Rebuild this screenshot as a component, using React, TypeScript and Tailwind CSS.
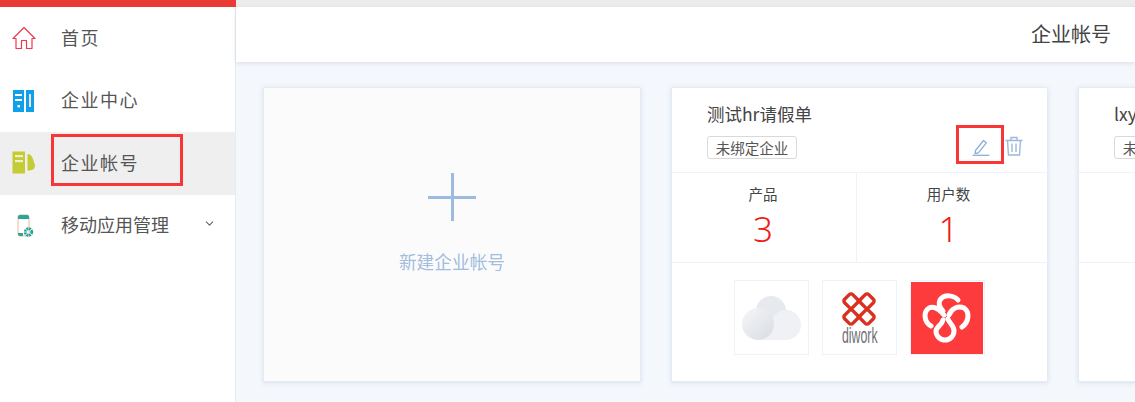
import { ChevronDown } from 'lucide-react'

const cjk = "font-['Noto_Sans_CJK_SC','Noto_Sans',sans-serif]"

function HomeIcon() {
  return (
    <svg width="24" height="24" viewBox="0 0 24 24" fill="none" stroke="#f0384f" strokeWidth="1.2">
      <path d="M1 12.5 12 1.5l11 11h-3V22.5h-5.5v-8h-5v8H4V12.5z" strokeLinejoin="round" />
    </svg>
  )
}

function BooksIcon() {
  return (
    <svg width="24" height="24" viewBox="0 0 24 24">
      <rect x="1" y="1" width="11" height="22" fill="#0ea0ea" />
      <rect x="14" y="1" width="8" height="22" fill="#0ea0ea" />
      <rect x="3" y="5" width="7" height="2" fill="#fff" />
      <rect x="3" y="10" width="7" height="2" fill="#fff" />
      <rect x="5.5" y="16" width="2.4" height="2.4" fill="#fff" />
      <rect x="17" y="5" width="2" height="13" fill="#f4dfe8" />
    </svg>
  )
}

function AccountIcon() {
  return (
    <svg width="24" height="24" viewBox="0 0 24 24">
      <rect x="0.5" y="0.5" width="12.500" height="22" fill="#c3cb35" />
      <rect x="3" y="4" width="8" height="2.2" fill="#eef0cc" />
      <rect x="3" y="9" width="8" height="2.2" fill="#eef0cc" />
      <path d="M15.500 3c3.500 0 5 3 6 6.500.7 2.500 1.500 3.500 1.500 5 0 3-2 5-7.500 5z" fill="#c3cb35" />
    </svg>
  )
}

function MobileIcon() {
  return (
    <svg width="18" height="24" viewBox="0 0 18 24" fill="none">
      <rect x="1" y="1" width="11" height="21" rx="1.800" stroke="#e9b9a0" strokeWidth="1" />
      <path d="M1 3a2 2 0 0 1 2-2h7a2 2 0 0 1 2 2v2H1z" fill="#27a69a" />
      <path d="M1 19h5v3H3a2 2 0 0 1-2-2z" fill="#27a69a" />
      <circle cx="11.500" cy="18" r="3.300" stroke="#27a69a" strokeWidth="2.800" strokeDasharray="2 0.600" />
    </svg>
  )
}

function PencilIcon() {
  return (
    <svg width="18" height="18" viewBox="0 0 18 18" fill="none" stroke="#8fafd8" strokeWidth="1.300">
      <path d="M3.500 12.500 11.500 2.500l2.800 2.300-8 10-3.200.700z" strokeLinejoin="round" />
      <path d="M0.500 17.300h17" strokeWidth="1.300" />
    </svg>
  )
}

function TrashIcon() {
  return (
    <svg width="18" height="20" viewBox="0 0 18 20" fill="none" stroke="#9db8dc" strokeWidth="1.400">
      <path d="M0.500 4.500h17M6 4.500V1.500h6v3M2.500 4.500l1 14.500h11l1-14.500M7 7.500v8.500M11 7.500v8.500" />
    </svg>
  )
}

function CloudLogo() {
  return (
    <svg width="60" height="44" viewBox="0 0 60 44">
      <defs>
        <linearGradient id="ball" x1="0" y1="0" x2="1" y2="1">
          <stop offset="0" stopColor="#f5f6f8" />
          <stop offset="1" stopColor="#d8dce2" />
        </linearGradient>
      </defs>
      <circle cx="29" cy="15" r="15" fill="#e6e9ed" />
      <circle cx="44" cy="29" r="15" fill="#f0f1f4" />
      <rect x="18" y="27" width="28" height="17" fill="#f0f1f4" />
      <circle cx="16" cy="28" r="16" fill="url(#ball)" />
    </svg>
  )
}

function DiworkLogo() {
  return (
    <div className="flex flex-col items-center pt-[2px]">
      <svg width="38" height="35" viewBox="0 0 38 35" fill="none" stroke="#d9301f" strokeWidth="3.400">
        <rect x="5.250" y="3.250" width="11.500" height="11.500" rx="2.500" transform="rotate(45 11 9)" />
        <rect x="21.250" y="3.250" width="11.500" height="11.500" rx="2.500" transform="rotate(45 27 9)" />
        <rect x="5.250" y="19.250" width="11.500" height="11.500" rx="2.500" transform="rotate(45 11 25)" />
        <rect x="21.250" y="19.250" width="11.500" height="11.500" rx="2.500" transform="rotate(45 27 25)" />
      </svg>
      <span className="font-['Liberation_Sans',sans-serif] text-[22px] leading-[18px] text-[#6f7073] scale-x-[0.56]">diwork</span>
    </div>
  )
}

function FlowerLogo() {
  return (
    <svg width="72" height="72" viewBox="0 0 72 72" fill="none" stroke="#fff" strokeWidth="5" strokeLinecap="round">
      <path d="M47 18C43 13 33 12 29 18 27 22 29 26 32 29" />
      <path d="M20 44C13 40 12 30 18 26 24 23 29 28 33 33" />
      <path d="M51 45C58 40 59 30 53 26 47 23 40 27 38 33" />
      <path d="M37 37C38 41 43 43 43 49 43 54 39 58 34 58 29 58 25 54 25 49 25 45 31 43 32 38" />
    </svg>
  )
}

function NavItem({ icon, label, active, wide, chevron }: { icon: React.ReactNode; label: string; active?: boolean; wide?: boolean; chevron?: boolean }) {
  return (
    <div className={`flex h-[62.500px] items-center ${active ? 'bg-[#efefef]' : ''}`}>
      <div className="flex w-[61px] shrink-0 justify-start pl-3">{icon}</div>
      <span className={`pb-[2px] text-[18px] text-[#555] ${wide ? 'tracking-[1.500px]' : 'text-[17.700px]'}`}>{label}</span>
      {chevron && <ChevronDown className="mb-1 ml-[34px] text-[#666]" size={13} />}
    </div>
  )
}

function CompanyCard({ title, children }: { title: string; children?: React.ReactNode }) {
  return (
    <div className="h-[295px] w-[377px] shrink-0 rounded-[2px] border border-[#e3ebf6] bg-white shadow-[0_1px_4px_rgba(190,205,230,0.5)]">
      <div className="flex h-[85px] items-end justify-between border-b border-[#edf3fa] pb-[13px] pl-[35px] pr-[24px]">
        <div>
          <div className="text-[17.500px] leading-[24px] text-[#444]">{title}</div>
          <div className="mt-[10px] w-[90px] rounded-[3px] border border-[#d9d9d9] text-center text-[14.500px] leading-[21px] text-[#555]">未绑定企业</div>
        </div>
        <div className="flex items-end gap-[15px] pb-[3px]">
          <PencilIcon />
          <TrashIcon />
        </div>
      </div>
      <div className="flex h-[90px] border-b border-[#edf3fa]">
        <Stat label="产品" value="3" className="w-[184px] pr-[2px]" />
        <div className="w-px bg-[#edf3fa]" />
        <Stat label="用户数" value="1" className="flex-1 pr-[7px]" />
      </div>
      {children}
    </div>
  )
}

function Stat({ label, value, className }: { label: string; value: string; className: string }) {
  return (
    <div className={`flex flex-col items-center pt-[10px] ${className}`}>
      <div className="text-[14.500px] leading-[22px] text-[#444]">{label}</div>
      <div className="font-['Noto_Sans',sans-serif] text-[35px] font-light leading-[48px] text-[#f01c1c]">{value}</div>
    </div>
  )
}

export default function App() {
  return (
    <div className={`relative flex h-[402px] w-[1135px] overflow-hidden bg-[#f4f7fb] ${cjk}`}>
      <aside className="w-[236px] shrink-0 bg-white">
        <div className="h-[7px] bg-[#ea3a36]" />
        <div className="h-[395px] border-r border-[#e6ebf2]">
          <NavItem icon={<HomeIcon />} label="首页" wide />
          <NavItem icon={<BooksIcon />} label="企业中心" wide />
          <NavItem icon={<AccountIcon />} label="企业帐号" wide active />
          <NavItem icon={<div className="pl-[5px]"><MobileIcon /></div>} label="移动应用管理" chevron />
        </div>
      </aside>
      <main className="min-w-0 flex-1">
        <div className="h-[7px] bg-[#ececec]" />
        <header className="flex h-[55px] items-center justify-end bg-white pb-[2px] pr-6 text-[20px] text-[#444] shadow-[0_1px_4px_rgba(180,190,205,0.45)]">
          企业帐号
        </header>
        <div className="flex gap-[30px] pl-[27px] pt-[25px]">
          <div className="flex h-[295px] w-[378px] shrink-0 flex-col items-center rounded-[2px] border border-[#e3ebf6] bg-[#fbfbfc] pt-[85px] shadow-[0_1px_4px_rgba(190,205,230,0.5)]">
            <div className="relative h-12 w-12">
              <div className="absolute left-0 top-[22.500px] h-[3px] w-12 bg-[#9dbbdc]" />
              <div className="absolute left-[22.500px] top-0 h-12 w-[3px] bg-[#9dbbdc]" />
            </div>
            <div className="mt-[27px] text-[17.700px] leading-[26px] text-[#a3bddc]">新建企业帐号</div>
          </div>
          <CompanyCard title="测试hr请假单">
            <div className="flex items-center gap-[13px] pl-[62px] pt-[17px]">
              <div className="flex h-[75px] w-[75px] items-center justify-center border border-[#eef3fa]"><CloudLogo /></div>
              <div className="flex h-[75px] w-[75px] items-center justify-center border border-[#eef3fa]"><DiworkLogo /></div>
              <div className="flex h-[75px] w-[75px] items-end justify-start border border-[#eef3fa] bg-white">
                <div className="bg-[#fd3b3c]"><FlowerLogo /></div>
              </div>
            </div>
          </CompanyCard>
          <CompanyCard title="lxy" />
        </div>
      </main>
      <div className="absolute left-[51px] top-[134px] h-[52px] w-[132px] border-[3px] border-[#f93636]" />
      <div className="absolute left-[956px] top-[125px] h-[39px] w-[48px] border-[3px] border-[#f93636]" />
    </div>
  )
}
